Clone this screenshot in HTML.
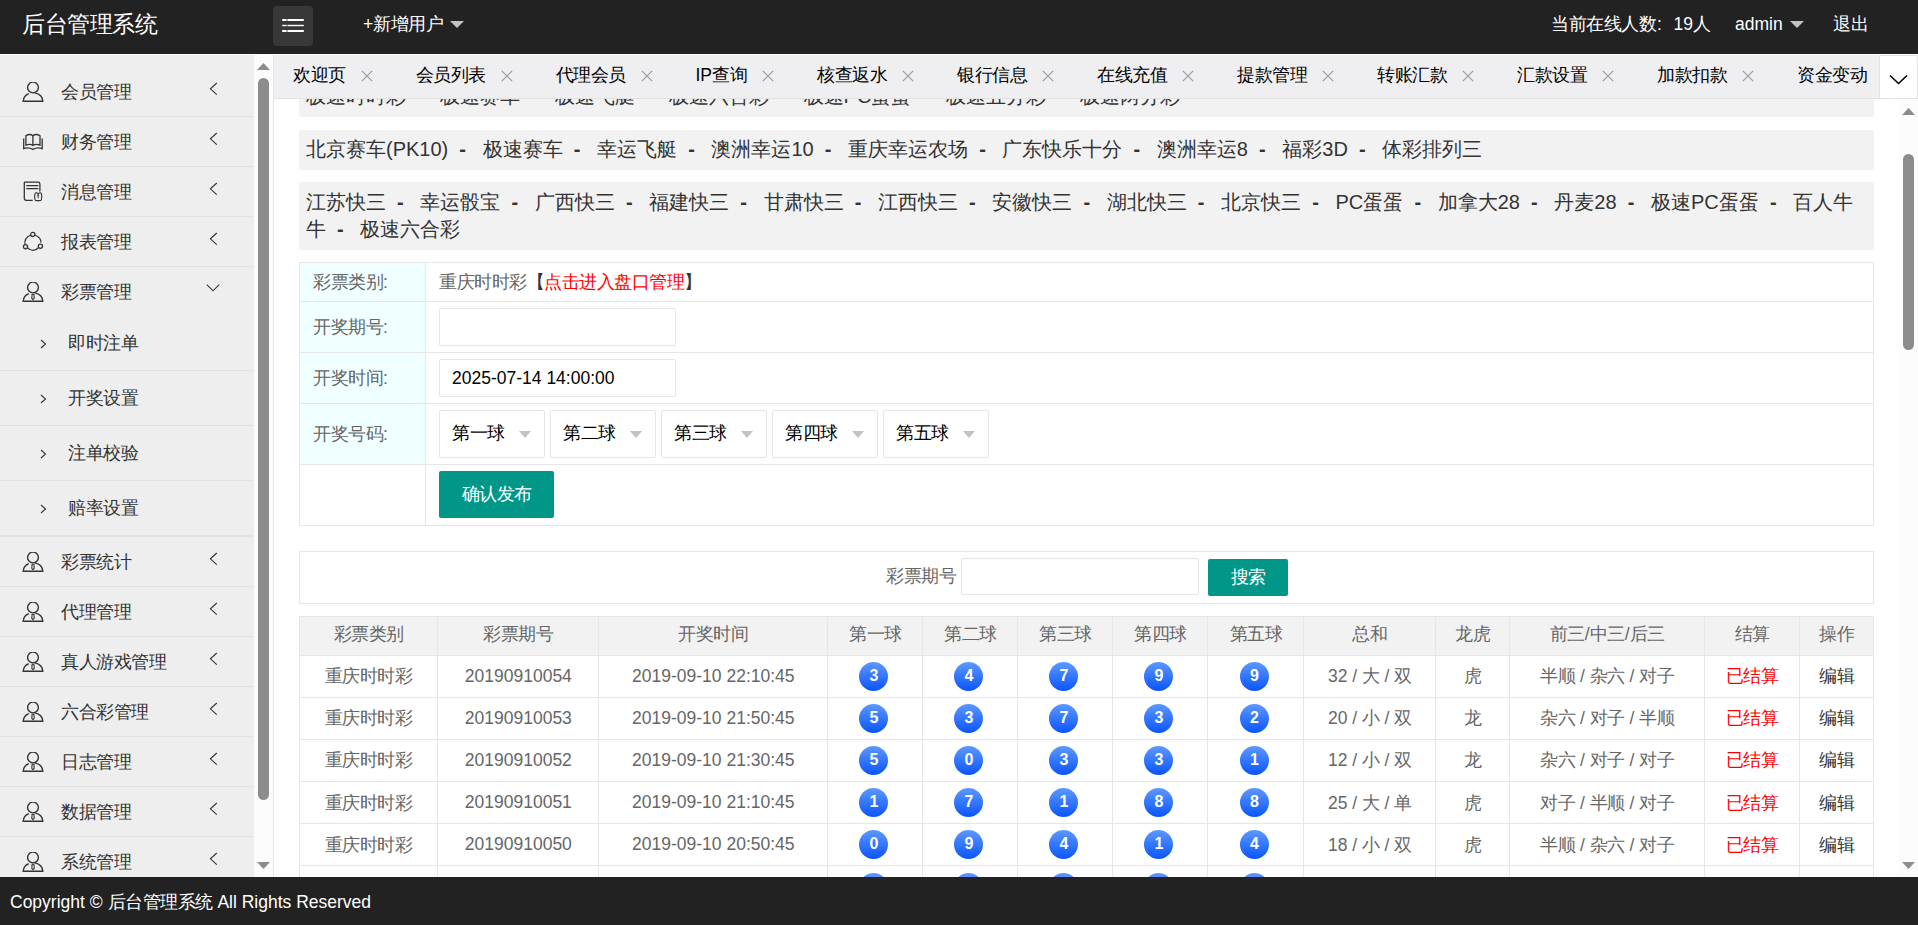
<!DOCTYPE html>
<html><head><meta charset="utf-8"><title>admin</title>
<style>
*{margin:0;padding:0;box-sizing:border-box}
html,body{width:1918px;height:925px;overflow:hidden}
body{position:relative;background:#fff;font-family:"Liberation Sans",sans-serif;color:#333}
.abs{position:absolute;white-space:nowrap}
.k{letter-spacing:-.5px}
.blk .k{letter-spacing:0}
/* header */
.hdr{position:absolute;left:0;top:0;width:1918px;height:54px;background:#222;color:#fff}
.logo{left:22px;top:12px;font-size:22.5px;line-height:26px}
.menubtn{left:273px;top:6px;width:40px;height:40px;border-radius:4px;background:#383838}
.h17{font-size:17.5px;line-height:22px;top:13px}
.tri{display:block;width:0;height:0;border-left:7px solid transparent;border-right:7px solid transparent;border-top:7px solid #c2c2c2}
/* nav */
.nav{position:absolute;left:0;top:55px;width:254px;height:822px;background:#eee;overflow:hidden}
.navsb{position:absolute;left:254px;top:55px;width:19px;height:822px;background:#fcfcfc}
.vline{position:absolute;left:273px;top:55px;width:1px;height:822px;background:#e6e6e6}
.it{position:absolute;left:0;width:254px;height:50px;border-bottom:1px solid #e2e2e2}
.it .tx{position:absolute;left:61px;top:14px;font-size:17.5px;line-height:22px;color:#333}
.it svg.ic{position:absolute;left:22px;top:15px}
.it svg.ch{position:absolute;left:207px;top:13px}
.sub{position:absolute;left:0;width:254px;height:55px;border-bottom:1px solid #e2e2e2}
.sub .tx{position:absolute;left:68px;top:16px;font-size:17.5px;line-height:22px;color:#333}
.sub svg{position:absolute;left:38px;top:21px}
/* tabs */
.tabbar{position:absolute;left:273px;top:55px;width:1645px;height:44px;background:#efeef0;border-left:1px solid #e6e6e6;border-bottom:1px solid #e2e2e2;overflow:hidden}
.tabs{position:absolute;left:0;top:0;height:43px;display:flex}
.tab{padding:0 24px 3px 19px;height:43px;display:flex;align-items:center;font-size:17.5px;color:#000;white-space:nowrap}
.tab svg{margin-left:15px;position:relative;top:1px}
.tabdd{position:absolute;left:1879px;top:55px;width:39px;height:44px;background:#fff;border:1px solid #e2e2e2;border-radius:2px}
/* content */
.content{position:absolute;left:274px;top:99px;width:1625px;height:778px;overflow:hidden;background:#fff}
.csb{position:absolute;left:1899px;top:99px;width:19px;height:778px;background:#fcfcfc}
.blk{position:absolute;left:25px;width:1575px;background:#f2f2f2;border-radius:2px;padding:6px 7px;font-size:20px;line-height:27px;color:#333;white-space:nowrap}
.sp{display:inline-block;width:34.4px;padding-left:11.1px;font-weight:bold}
.ftab{position:absolute;left:25px;width:1575px;border:1px solid #e6e6e6}
.frow{position:relative;border-bottom:1px solid #e6e6e6;display:flex}
.flab{width:126px;height:100%;background:#f0ffff;border-right:1px solid #e6e6e6;font-size:17.5px;color:#666;display:flex;align-items:center;padding-left:13px;white-space:nowrap}
.fval{position:relative;flex:1;height:100%}
.inp{position:absolute;width:237px;height:38px;border:1px solid #e6e6e6;border-radius:2px;background:#fff}
.inptx{position:absolute;left:12px;top:7px;font-size:17.5px;line-height:22px;color:#000}
.sel{position:absolute;width:106px;height:48px;border:1px solid #e6e6e6;border-radius:2px;background:#fff}
.seltx{position:absolute;left:12px;top:11px;font-size:17.5px;line-height:22px;color:#000}
.stri{position:absolute;left:79px;top:19.5px;width:0;height:0;border-left:6.5px solid transparent;border-right:6.5px solid transparent;border-top:7px solid #c2c2c2}
.btn{position:absolute;background:#009688;color:#fff;border-radius:2px;font-size:17.5px;line-height:47px;text-align:center}
.sbox{position:absolute;left:25px;width:1575px;height:53px;border:1px solid #e6e6e6}
.dt{position:absolute;left:25px;border-collapse:collapse;table-layout:fixed;font-size:17.5px;color:#666}
.dt td{border:1px solid #e6e6e6;text-align:center;height:42.2px;padding:0;white-space:nowrap}
.dt tr.th td{height:38.5px;background:#f2f2f2;padding-bottom:4px}
.ball{display:inline-block;width:29px;height:29px;border-radius:50%;background:linear-gradient(#5d98ff,#0a55fb);color:#fff;font-weight:bold;font-size:16px;line-height:28px;text-align:center;vertical-align:middle;position:relative;top:0;left:-1.5px}
.footer{position:absolute;left:0;top:877px;width:1918px;height:48px;background:#222;color:#fff}
</style></head><body>

<div class="hdr">
  <div class="abs logo"><span class="k">后台管理系统</span></div>
  <div class="abs menubtn">
    <svg width="40" height="40" style="position:absolute;left:0;top:0">
      <g fill="#fff"><rect x="9.2" y="13" width="4.4" height="2"/><rect x="14.4" y="13" width="16.4" height="2"/>
      <rect x="9.2" y="18.8" width="4.4" height="1.4"/><rect x="14.4" y="18.8" width="16.4" height="1.4"/>
      <rect x="9.2" y="24" width="4.4" height="2"/><rect x="14.4" y="24" width="16.4" height="2"/></g>
    </svg>
  </div>
  <div class="abs h17" style="left:363px">+<span class="k">新增用户</span></div><i class="abs tri" style="left:450px;top:21px"></i>
  <div class="abs h17" style="left:1551px"><span class="k">当前在线人数</span><span style="display:inline-block;width:17.5px;padding-left:1px">:</span>19<span class="k">人</span></div>
  <div class="abs h17" style="left:1735px">admin</div><i class="abs tri" style="left:1790px;top:21px"></i>
  <div class="abs h17" style="left:1833px"><span class="k">退出</span></div>
</div>

<div class="nav" id="nav">
<div class="it" style="top:12px"><svg class="ic" width="22" height="22" viewBox="0 0 22 22"><g fill="none" stroke="#333" stroke-width="1.4"><circle cx="11" cy="5.5" r="5.4"/><path d="M6.8 11.6 C3.4 12.9 1.4 15.7 1.2 19.2 L20.8 19.2 C20.6 15.2 18 12 12.8 10.9"/></g></svg><div class="tx"><span class="k">会员管理</span></div><svg class="ch" width="12" height="16" viewBox="0 0 12 16"><path d="M9.8 3 L3.4 8.8 L9.8 14.6" fill="none" stroke="#333" stroke-width="1.1"/></svg></div>
<div class="it" style="top:62px"><svg class="ic" width="22" height="22" viewBox="0 0 22 22" style="overflow:visible"><g fill="none" stroke="#333" stroke-width="1.3"><path d="M1.7 6.4 V16.7 C4.6 15.5 8 15.7 10.9 17.4 C13.8 15.7 17.2 15.5 20.2 16.7 V6.4"/><path d="M3.9 13.1 V3.7 C6.2 2.3 9.2 2.3 10.9 3.7 C12.6 2.3 15.6 2.3 18 3.7 V13.1 C15.6 12.1 12.6 12.2 10.9 13.4 C9.2 12.2 6.2 12.1 3.9 13.1 Z"/><path d="M10.9 3.7 V13.4"/></g></svg><div class="tx"><span class="k">财务管理</span></div><svg class="ch" width="12" height="16" viewBox="0 0 12 16"><path d="M9.8 3 L3.4 8.8 L9.8 14.6" fill="none" stroke="#333" stroke-width="1.1"/></svg></div>
<div class="it" style="top:112px"><svg class="ic" width="22" height="22" viewBox="0 0 22 22" style="overflow:visible"><g fill="none" stroke="#333" stroke-width="1.3"><path d="M10.7 18.3 H4.1 C3 18.3 2.3 17.6 2.3 16.5 V0.9 C2.3 0.4 2.6 0.1 3.1 0.1 H16.1 C17.2 0.1 17.9 0.8 17.9 1.9 V9.4"/><path d="M4.3 3.6 H16.3 M4.3 6.6 H16.3"/><path d="M13.2 11.2 C13.7 10.6 14.6 10.6 16.2 11.4 C17.8 10.6 18.7 10.6 19.2 11.2 C19.8 12.4 19.8 15.5 19.4 17.6 C19.2 18.3 18.8 18.6 18 18.6 H14.4 C13.6 18.6 13.2 18.3 13 17.6 C12.6 15.5 12.6 12.4 13.2 11.2 Z" stroke-width="1.1"/><path d="M16.2 11.6 V16.2 M15.4 13.4 H17" stroke-width="1"/></g></svg><div class="tx"><span class="k">消息管理</span></div><svg class="ch" width="12" height="16" viewBox="0 0 12 16"><path d="M9.8 3 L3.4 8.8 L9.8 14.6" fill="none" stroke="#333" stroke-width="1.1"/></svg></div>
<div class="it" style="top:162px"><svg class="ic" width="22" height="22" viewBox="0 0 22 22" style="overflow:visible"><g fill="none" stroke="#333" stroke-width="1.3"><circle cx="10.8" cy="2.4" r="2.1"/><circle cx="3.5" cy="14.8" r="2.1"/><circle cx="18.4" cy="14.2" r="2.1"/><path d="M8.8 3 C4.8 4.6 2.4 8.2 2.9 12.7"/><path d="M12.8 3 C16.6 4.5 19 7.4 19 10.4"/><path d="M5.5 15.9 C8.9 19.2 13.3 19.3 16.5 15.8"/></g></svg><div class="tx"><span class="k">报表管理</span></div><svg class="ch" width="12" height="16" viewBox="0 0 12 16"><path d="M9.8 3 L3.4 8.8 L9.8 14.6" fill="none" stroke="#333" stroke-width="1.1"/></svg></div>
<div class="it" style="top:212px;border-bottom:none"><svg class="ic" width="22" height="22" viewBox="0 0 22 22"><g fill="none" stroke="#333" stroke-width="1.4"><circle cx="11" cy="5.5" r="5.4"/><path d="M6.8 11.6 C3.4 12.9 1.4 15.7 1.2 19.2 L20.8 19.2 C20.6 15.2 18 12 12.8 10.9"/><path d="M10.1 12.3 L11.9 12.3 L12.2 16.3 L11 17.7 L9.8 16.3 Z" stroke-width="1.1"/></g></svg><div class="tx"><span class="k">彩票管理</span></div><svg class="ch" width="16" height="16" viewBox="0 0 16 16" style="left:206px"><path d="M0.8 4.6 L7 10.8 L13.2 4.6" fill="none" stroke="#333" stroke-width="1.1"/></svg></div>
<div class="sub" style="top:261px"><svg width="10" height="14" viewBox="0 0 10 14"><path d="M3 3 L7.5 7 L3 11" fill="none" stroke="#333" stroke-width="1.1"/></svg><div class="tx"><span class="k">即时注单</span></div></div>
<div class="sub" style="top:316px"><svg width="10" height="14" viewBox="0 0 10 14"><path d="M3 3 L7.5 7 L3 11" fill="none" stroke="#333" stroke-width="1.1"/></svg><div class="tx"><span class="k">开奖设置</span></div></div>
<div class="sub" style="top:371px"><svg width="10" height="14" viewBox="0 0 10 14"><path d="M3 3 L7.5 7 L3 11" fill="none" stroke="#333" stroke-width="1.1"/></svg><div class="tx"><span class="k">注单校验</span></div></div>
<div class="sub" style="top:426px"><svg width="10" height="14" viewBox="0 0 10 14"><path d="M3 3 L7.5 7 L3 11" fill="none" stroke="#333" stroke-width="1.1"/></svg><div class="tx"><span class="k">赔率设置</span></div></div>
<div style="position:absolute;left:0;top:481px;width:254px;height:1px;background:#e2e2e2"></div>
<div class="it" style="top:482px"><svg class="ic" width="22" height="22" viewBox="0 0 22 22"><g fill="none" stroke="#333" stroke-width="1.4"><circle cx="11" cy="5.5" r="5.4"/><path d="M6.8 11.6 C3.4 12.9 1.4 15.7 1.2 19.2 L20.8 19.2 C20.6 15.2 18 12 12.8 10.9"/><path d="M10.1 12.3 L11.9 12.3 L12.2 16.3 L11 17.7 L9.8 16.3 Z" stroke-width="1.1"/></g></svg><div class="tx"><span class="k">彩票统计</span></div><svg class="ch" width="12" height="16" viewBox="0 0 12 16"><path d="M9.8 3 L3.4 8.8 L9.8 14.6" fill="none" stroke="#333" stroke-width="1.1"/></svg></div>
<div class="it" style="top:532px"><svg class="ic" width="22" height="22" viewBox="0 0 22 22"><g fill="none" stroke="#333" stroke-width="1.4"><circle cx="11" cy="5.5" r="5.4"/><path d="M6.8 11.6 C3.4 12.9 1.4 15.7 1.2 19.2 L20.8 19.2 C20.6 15.2 18 12 12.8 10.9"/><path d="M10.1 12.3 L11.9 12.3 L12.2 16.3 L11 17.7 L9.8 16.3 Z" stroke-width="1.1"/></g></svg><div class="tx"><span class="k">代理管理</span></div><svg class="ch" width="12" height="16" viewBox="0 0 12 16"><path d="M9.8 3 L3.4 8.8 L9.8 14.6" fill="none" stroke="#333" stroke-width="1.1"/></svg></div>
<div class="it" style="top:582px"><svg class="ic" width="22" height="22" viewBox="0 0 22 22"><g fill="none" stroke="#333" stroke-width="1.4"><circle cx="11" cy="5.5" r="5.4"/><path d="M6.8 11.6 C3.4 12.9 1.4 15.7 1.2 19.2 L20.8 19.2 C20.6 15.2 18 12 12.8 10.9"/><path d="M10.1 12.3 L11.9 12.3 L12.2 16.3 L11 17.7 L9.8 16.3 Z" stroke-width="1.1"/></g></svg><div class="tx"><span class="k">真人游戏管理</span></div><svg class="ch" width="12" height="16" viewBox="0 0 12 16"><path d="M9.8 3 L3.4 8.8 L9.8 14.6" fill="none" stroke="#333" stroke-width="1.1"/></svg></div>
<div class="it" style="top:632px"><svg class="ic" width="22" height="22" viewBox="0 0 22 22"><g fill="none" stroke="#333" stroke-width="1.4"><circle cx="11" cy="5.5" r="5.4"/><path d="M6.8 11.6 C3.4 12.9 1.4 15.7 1.2 19.2 L20.8 19.2 C20.6 15.2 18 12 12.8 10.9"/><path d="M10.1 12.3 L11.9 12.3 L12.2 16.3 L11 17.7 L9.8 16.3 Z" stroke-width="1.1"/></g></svg><div class="tx"><span class="k">六合彩管理</span></div><svg class="ch" width="12" height="16" viewBox="0 0 12 16"><path d="M9.8 3 L3.4 8.8 L9.8 14.6" fill="none" stroke="#333" stroke-width="1.1"/></svg></div>
<div class="it" style="top:682px"><svg class="ic" width="22" height="22" viewBox="0 0 22 22"><g fill="none" stroke="#333" stroke-width="1.4"><circle cx="11" cy="5.5" r="5.4"/><path d="M6.8 11.6 C3.4 12.9 1.4 15.7 1.2 19.2 L20.8 19.2 C20.6 15.2 18 12 12.8 10.9"/><path d="M10.1 12.3 L11.9 12.3 L12.2 16.3 L11 17.7 L9.8 16.3 Z" stroke-width="1.1"/></g></svg><div class="tx"><span class="k">日志管理</span></div><svg class="ch" width="12" height="16" viewBox="0 0 12 16"><path d="M9.8 3 L3.4 8.8 L9.8 14.6" fill="none" stroke="#333" stroke-width="1.1"/></svg></div>
<div class="it" style="top:732px"><svg class="ic" width="22" height="22" viewBox="0 0 22 22"><g fill="none" stroke="#333" stroke-width="1.4"><circle cx="11" cy="5.5" r="5.4"/><path d="M6.8 11.6 C3.4 12.9 1.4 15.7 1.2 19.2 L20.8 19.2 C20.6 15.2 18 12 12.8 10.9"/><path d="M10.1 12.3 L11.9 12.3 L12.2 16.3 L11 17.7 L9.8 16.3 Z" stroke-width="1.1"/></g></svg><div class="tx"><span class="k">数据管理</span></div><svg class="ch" width="12" height="16" viewBox="0 0 12 16"><path d="M9.8 3 L3.4 8.8 L9.8 14.6" fill="none" stroke="#333" stroke-width="1.1"/></svg></div>
<div class="it" style="top:782px"><svg class="ic" width="22" height="22" viewBox="0 0 22 22"><g fill="none" stroke="#333" stroke-width="1.4"><circle cx="11" cy="5.5" r="5.4"/><path d="M6.8 11.6 C3.4 12.9 1.4 15.7 1.2 19.2 L20.8 19.2 C20.6 15.2 18 12 12.8 10.9"/><path d="M10.1 12.3 L11.9 12.3 L12.2 16.3 L11 17.7 L9.8 16.3 Z" stroke-width="1.1"/></g></svg><div class="tx"><span class="k">系统管理</span></div><svg class="ch" width="12" height="16" viewBox="0 0 12 16"><path d="M9.8 3 L3.4 8.8 L9.8 14.6" fill="none" stroke="#333" stroke-width="1.1"/></svg></div>
</div>
<div class="navsb">
  <svg width="19" height="822" style="position:absolute;left:0;top:0">
    <path d="M3 15 L16 15 L9.5 8 Z" fill="#8c8c8c"/>
    <rect x="4" y="23" width="11" height="722" rx="5.5" fill="#8c8c8c"/>
    <path d="M3 807 L16 807 L9.5 814 Z" fill="#8c8c8c"/>
  </svg>
</div>

<div class="tabbar">
  <div class="tabs" id="tabs"><div class="tab"><span class="k">欢迎页</span><svg width="12" height="12" viewBox="0 0 12 12"><path d="M0.8 0.8 L11.2 11.2 M11.2 0.8 L0.8 11.2" stroke="#999" stroke-width="1.1"/></svg></div><div class="tab"><span class="k">会员列表</span><svg width="12" height="12" viewBox="0 0 12 12"><path d="M0.8 0.8 L11.2 11.2 M11.2 0.8 L0.8 11.2" stroke="#999" stroke-width="1.1"/></svg></div><div class="tab"><span class="k">代理会员</span><svg width="12" height="12" viewBox="0 0 12 12"><path d="M0.8 0.8 L11.2 11.2 M11.2 0.8 L0.8 11.2" stroke="#999" stroke-width="1.1"/></svg></div><div class="tab">IP<span class="k">查询</span><svg width="12" height="12" viewBox="0 0 12 12"><path d="M0.8 0.8 L11.2 11.2 M11.2 0.8 L0.8 11.2" stroke="#999" stroke-width="1.1"/></svg></div><div class="tab"><span class="k">核查返水</span><svg width="12" height="12" viewBox="0 0 12 12"><path d="M0.8 0.8 L11.2 11.2 M11.2 0.8 L0.8 11.2" stroke="#999" stroke-width="1.1"/></svg></div><div class="tab"><span class="k">银行信息</span><svg width="12" height="12" viewBox="0 0 12 12"><path d="M0.8 0.8 L11.2 11.2 M11.2 0.8 L0.8 11.2" stroke="#999" stroke-width="1.1"/></svg></div><div class="tab"><span class="k">在线充值</span><svg width="12" height="12" viewBox="0 0 12 12"><path d="M0.8 0.8 L11.2 11.2 M11.2 0.8 L0.8 11.2" stroke="#999" stroke-width="1.1"/></svg></div><div class="tab"><span class="k">提款管理</span><svg width="12" height="12" viewBox="0 0 12 12"><path d="M0.8 0.8 L11.2 11.2 M11.2 0.8 L0.8 11.2" stroke="#999" stroke-width="1.1"/></svg></div><div class="tab"><span class="k">转账汇款</span><svg width="12" height="12" viewBox="0 0 12 12"><path d="M0.8 0.8 L11.2 11.2 M11.2 0.8 L0.8 11.2" stroke="#999" stroke-width="1.1"/></svg></div><div class="tab"><span class="k">汇款设置</span><svg width="12" height="12" viewBox="0 0 12 12"><path d="M0.8 0.8 L11.2 11.2 M11.2 0.8 L0.8 11.2" stroke="#999" stroke-width="1.1"/></svg></div><div class="tab"><span class="k">加款扣款</span><svg width="12" height="12" viewBox="0 0 12 12"><path d="M0.8 0.8 L11.2 11.2 M11.2 0.8 L0.8 11.2" stroke="#999" stroke-width="1.1"/></svg></div><div class="tab"><span class="k">资金变动</span><svg width="12" height="12" viewBox="0 0 12 12"><path d="M0.8 0.8 L11.2 11.2 M11.2 0.8 L0.8 11.2" stroke="#999" stroke-width="1.1"/></svg></div></div>
</div>
<div class="tabdd">
  <svg width="37" height="42" style="position:absolute;left:0;top:0"><path d="M10 19.5 L18.5 27.5 L27 19.5" fill="none" stroke="#000" stroke-width="1.6"/></svg>
</div>

<div class="content" id="content">
<div class="blk" style="top:-22px;height:40px"><span class="k">极速时时彩</span><span class="sp">-</span><span class="k">极速赛车</span><span class="sp">-</span><span class="k">极速飞艇</span><span class="sp">-</span><span class="k">极速六合彩</span><span class="sp">-</span><span class="k">极速</span>PC<span class="k">蛋蛋</span><span class="sp">-</span><span class="k">极速五分彩</span><span class="sp">-</span><span class="k">极速两分彩</span></div>
<div class="blk" style="top:31px;height:40px"><span class="k">北京赛车</span>(PK10)<span class="sp">-</span><span class="k">极速赛车</span><span class="sp">-</span><span class="k">幸运飞艇</span><span class="sp">-</span><span class="k">澳洲幸运</span>10<span class="sp">-</span><span class="k">重庆幸运农场</span><span class="sp">-</span><span class="k">广东快乐十分</span><span class="sp">-</span><span class="k">澳洲幸运</span>8<span class="sp">-</span><span class="k">福彩</span>3D<span class="sp">-</span><span class="k">体彩排列三</span></div>
<div class="blk" style="top:83px;height:68px;padding-top:7px"><span class="k">江苏快三</span><span class="sp">-</span><span class="k">幸运骰宝</span><span class="sp">-</span><span class="k">广西快三</span><span class="sp">-</span><span class="k">福建快三</span><span class="sp">-</span><span class="k">甘肃快三</span><span class="sp">-</span><span class="k">江西快三</span><span class="sp">-</span><span class="k">安徽快三</span><span class="sp">-</span><span class="k">湖北快三</span><span class="sp">-</span><span class="k">北京快三</span><span class="sp">-</span>PC<span class="k">蛋蛋</span><span class="sp">-</span><span class="k">加拿大</span>28<span class="sp">-</span><span class="k">丹麦</span>28<span class="sp">-</span><span class="k">极速</span>PC<span class="k">蛋蛋</span><span class="sp">-</span><span class="k">百人牛</span><br><span class="k">牛</span><span class="sp">-</span><span class="k">极速六合彩</span></div>
<div class="ftab" style="top:163px">
<div class="frow" style="height:39px"><div class="flab"><span class="k">彩票类别</span>:</div><div class="fval"><span style="position:absolute;left:13px;top:8px;font-size:17.5px;line-height:22px;color:#666"><span class="k">重庆时时彩</span><span style="color:#333"><span class="k">【</span></span><span style="color:#f00"><span class="k">点击进入盘口管理</span></span><span style="color:#333"><span class="k">】</span></span></span></div></div>
<div class="frow" style="height:51px"><div class="flab"><span class="k">开奖期号</span>:</div><div class="fval"><div class="inp" style="left:13px;top:6px"></div></div></div>
<div class="frow" style="height:51px"><div class="flab"><span class="k">开奖时间</span>:</div><div class="fval"><div class="inp" style="left:13px;top:6px"><span class="inptx">2025-07-14 14:00:00</span></div></div></div>
<div class="frow" style="height:61px"><div class="flab"><span class="k">开奖号码</span>:</div><div class="fval"><div class="sel" style="left:13px;top:6px"><span class="seltx"><span class="k">第一球</span></span><i class="stri"></i></div><div class="sel" style="left:124px;top:6px"><span class="seltx"><span class="k">第二球</span></span><i class="stri"></i></div><div class="sel" style="left:235px;top:6px"><span class="seltx"><span class="k">第三球</span></span><i class="stri"></i></div><div class="sel" style="left:346px;top:6px"><span class="seltx"><span class="k">第四球</span></span><i class="stri"></i></div><div class="sel" style="left:457px;top:6px"><span class="seltx"><span class="k">第五球</span></span><i class="stri"></i></div></div></div>
<div class="frow" style="height:60px;border-bottom:none"><div class="flab" style="background:#fff"></div><div class="fval"><div class="btn" style="left:13px;top:6px;width:115px;height:47px"><span class="k">确认发布</span></div></div></div>
</div>
<div class="sbox" style="top:452px">
<div class="abs" style="left:586px;top:13px;font-size:17.5px;line-height:22px;color:#666"><span class="k">彩票期号</span></div>
<div class="inp" style="left:661px;top:6px;width:238px;height:37px"></div>
<div class="btn" style="left:908px;top:7px;width:80px;height:37px;line-height:36px"><span class="k">搜索</span></div>
</div>
<table class="dt" style="top:517px"><colgroup><col style="width:138.4px"><col style="width:160.9px"><col style="width:229.0px"><col style="width:95.2px"><col style="width:94.8px"><col style="width:95.2px"><col style="width:94.9px"><col style="width:96.0px"><col style="width:132.0px"><col style="width:74.1px"><col style="width:194.6px"><col style="width:95.4px"><col style="width:73.5px"></colgroup><tr class="th"><td><span class="k">彩票类别</span></td><td><span class="k">彩票期号</span></td><td><span class="k">开奖时间</span></td><td><span class="k">第一球</span></td><td><span class="k">第二球</span></td><td><span class="k">第三球</span></td><td><span class="k">第四球</span></td><td><span class="k">第五球</span></td><td><span class="k">总和</span></td><td><span class="k">龙虎</span></td><td><span class="k">前三</span>/<span class="k">中三</span>/<span class="k">后三</span></td><td><span class="k">结算</span></td><td><span class="k">操作</span></td></tr><tr><td><span class="k">重庆时时彩</span></td><td>20190910054</td><td>2019-09-10 22:10:45</td><td><span class="ball">3</span></td><td><span class="ball">4</span></td><td><span class="ball">7</span></td><td><span class="ball">9</span></td><td><span class="ball">9</span></td><td>32 / <span class="k">大</span> / <span class="k">双</span></td><td><span class="k">虎</span></td><td><span class="k">半顺</span> / <span class="k">杂六</span> / <span class="k">对子</span></td><td style="color:#f00"><span class="k">已结算</span></td><td style="color:#333"><span class="k">编辑</span></td></tr><tr><td><span class="k">重庆时时彩</span></td><td>20190910053</td><td>2019-09-10 21:50:45</td><td><span class="ball">5</span></td><td><span class="ball">3</span></td><td><span class="ball">7</span></td><td><span class="ball">3</span></td><td><span class="ball">2</span></td><td>20 / <span class="k">小</span> / <span class="k">双</span></td><td><span class="k">龙</span></td><td><span class="k">杂六</span> / <span class="k">对子</span> / <span class="k">半顺</span></td><td style="color:#f00"><span class="k">已结算</span></td><td style="color:#333"><span class="k">编辑</span></td></tr><tr><td><span class="k">重庆时时彩</span></td><td>20190910052</td><td>2019-09-10 21:30:45</td><td><span class="ball">5</span></td><td><span class="ball">0</span></td><td><span class="ball">3</span></td><td><span class="ball">3</span></td><td><span class="ball">1</span></td><td>12 / <span class="k">小</span> / <span class="k">双</span></td><td><span class="k">龙</span></td><td><span class="k">杂六</span> / <span class="k">对子</span> / <span class="k">对子</span></td><td style="color:#f00"><span class="k">已结算</span></td><td style="color:#333"><span class="k">编辑</span></td></tr><tr><td><span class="k">重庆时时彩</span></td><td>20190910051</td><td>2019-09-10 21:10:45</td><td><span class="ball">1</span></td><td><span class="ball">7</span></td><td><span class="ball">1</span></td><td><span class="ball">8</span></td><td><span class="ball">8</span></td><td>25 / <span class="k">大</span> / <span class="k">单</span></td><td><span class="k">虎</span></td><td><span class="k">对子</span> / <span class="k">半顺</span> / <span class="k">对子</span></td><td style="color:#f00"><span class="k">已结算</span></td><td style="color:#333"><span class="k">编辑</span></td></tr><tr><td><span class="k">重庆时时彩</span></td><td>20190910050</td><td>2019-09-10 20:50:45</td><td><span class="ball">0</span></td><td><span class="ball">9</span></td><td><span class="ball">4</span></td><td><span class="ball">1</span></td><td><span class="ball">4</span></td><td>18 / <span class="k">小</span> / <span class="k">双</span></td><td><span class="k">虎</span></td><td><span class="k">半顺</span> / <span class="k">杂六</span> / <span class="k">对子</span></td><td style="color:#f00"><span class="k">已结算</span></td><td style="color:#333"><span class="k">编辑</span></td></tr><tr><td><span class="k">重庆时时彩</span></td><td>20190910049</td><td>2019-09-10 20:30:45</td><td><span class="ball">2</span></td><td><span class="ball">6</span></td><td><span class="ball">5</span></td><td><span class="ball">0</span></td><td><span class="ball">7</span></td><td>20 / <span class="k">小</span> / <span class="k">双</span></td><td><span class="k">龙</span></td><td><span class="k">杂六</span> / <span class="k">杂六</span> / <span class="k">杂六</span></td><td style="color:#f00"><span class="k">已结算</span></td><td style="color:#333"><span class="k">编辑</span></td></tr></table>
</div>
<div class="csb">
  <svg width="19" height="778" style="position:absolute;left:0;top:0">
    <path d="M3 16 L16 16 L9.5 9 Z" fill="#8c8c8c"/>
    <rect x="4" y="55" width="11" height="196" rx="5.5" fill="#8c8c8c"/>
    <path d="M3 763 L16 763 L9.5 770 Z" fill="#8c8c8c"/>
  </svg>
</div>

<div class="vline"></div>
<div class="footer">
  <div class="abs" style="left:10px;top:14px;font-size:17.5px;line-height:22px">Copyright © <span class="k">后台管理系统</span> All Rights Reserved</div>
</div>
</body></html>
